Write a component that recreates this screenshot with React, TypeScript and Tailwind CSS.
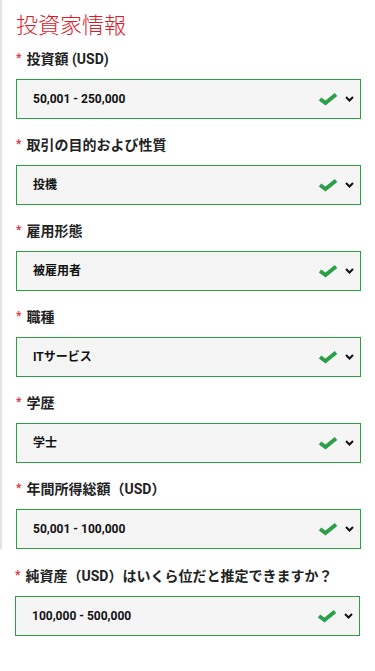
import React from "react";

const fields = [
  { label: "投資額 (USD)", value: "50,001 - 250,000" },
  { label: "取引の目的および性質", value: "投機" },
  { label: "雇用形態", value: "被雇用者" },
  { label: "職種", value: "ITサービス" },
  { label: "学歴", value: "学士" },
  { label: "年間所得総額（USD）", value: "50,001 - 100,000" },
];

const last = {
  label: "純資産（USD）はいくら位だと推定できますか？",
  value: "100,000 - 500,000",
};

function Check() {
  return (
    <svg width="20" height="14" viewBox="0 0 20 14" className="block">
      <path
        d="M2 7 L7.5 11 L18 2.5"
        fill="none"
        stroke="#2ca048"
        strokeWidth="4"
      />
    </svg>
  );
}

function Chevron() {
  return (
    <svg width="9" height="6" viewBox="0 0 9 6" className="block">
      <path d="M1 1 L4.5 4.5 L8 1" fill="none" stroke="#111" strokeWidth="2" />
    </svg>
  );
}

function Field({ label, value }: { label: string; value: string }) {
  return (
    <div>
      <div className="flex items-center h-5 mb-[10px] text-[14px] font-bold text-[#222]">
        <span className="text-[#e0313e] text-[12px] mr-[5px] -mt-[2px]">*</span>
        <span>{label}</span>
      </div>
      <div className="h-10 flex items-center border border-[#2aa043] bg-[#f5f5f5] pl-4 pr-[6px]">
        <span className="flex-1 text-[12px] font-bold text-[#111]">{value}</span>
        <Check />
        <span className="ml-[7px]">
          <Chevron />
        </span>
      </div>
    </div>
  );
}

export default function App() {
  return (
    <div
      className="w-[375px] h-[671px] bg-white overflow-hidden"
      style={{ fontFamily: "Roboto, 'Noto Sans CJK JP', sans-serif" }}
    >
      <div className="border-l-[2px] border-[#e3e3e3] pl-[14px] pr-[14px] pt-[11px]">
        <h1 className="text-[22px] leading-[30px] font-light text-[#dc1a2c] mb-2">
          投資家情報
        </h1>
        <div className="flex flex-col gap-4">
          {fields.map((f) => (
            <Field key={f.label} label={f.label} value={f.value} />
          ))}
        </div>
      </div>
      <div className="pl-[15px] pr-[15px] pt-[17px]">
        <Field label={last.label} value={last.value} />
      </div>
    </div>
  );
}
